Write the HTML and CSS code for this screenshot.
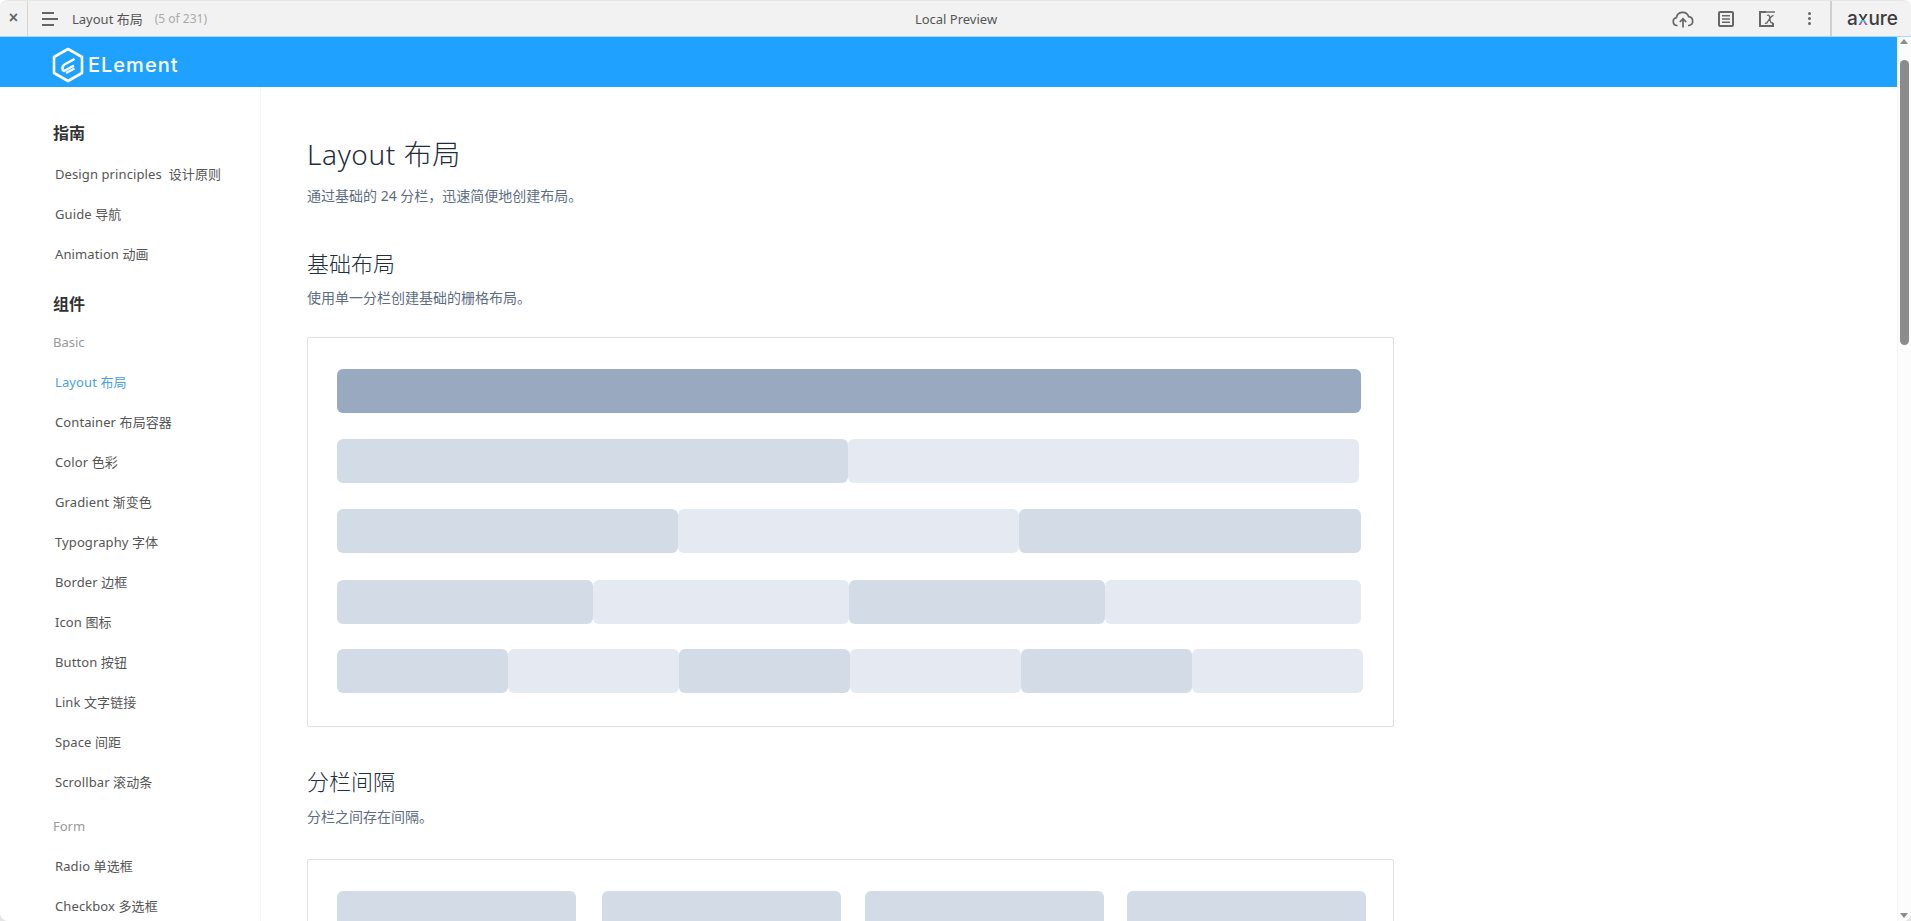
FILE: index.html
```html
<!DOCTYPE html>
<html lang="zh-CN">
<head>
<meta charset="utf-8">
<title>Layout 布局</title>
<link rel="stylesheet" href="styles.css">
</head>
<body>
<div class="app">
  <header class="topbar">
    <div class="bar-left">
      <button class="close">×</button>
      <div class="burger"><i class="l1"></i><i class="l2"></i><i class="l1"></i></div>
      <span class="page-name">Layout 布局</span>
      <span class="page-count">(5 of 231)</span>
    </div>
    <div class="bar-center">Local Preview</div>
    <div class="bar-right">
      <svg class="ico-cloud" width="22" height="18" viewBox="0 0 22 18" fill="none" stroke="#666" stroke-width="1.7"><path d="M5.5 15.5H5A4 4 0 0 1 4.4 7.6 6.3 6.3 0 0 1 16.6 6.6 4.5 4.5 0 0 1 17 15.5H16"/><path d="M11 17.5V9M7.8 12 11 8.8 14.2 12"/></svg>
      <svg class="ico-doc" width="16" height="16" viewBox="0 0 16 16" fill="none" stroke="#666"><rect x="1" y="1" width="14" height="14" rx="1" stroke-width="2"/><path d="M4 4.8H12M4 8H12M4 11.2H12" stroke-width="1.5"/></svg>
      <svg class="ico-var" width="17" height="16" viewBox="0 0 17 16" fill="none" stroke="#666"><path d="M7 1H1V15H14V12" stroke-width="2"/><path d="M7 1H16" stroke-width="1.4"/><path d="M8 4.5C10.5 3.5 10.5 5 11 8.5 11.4 11.500 12.200 12.500 14 11.500M14.500 4.500C12 4.500 9.500 9.500 8 11.800 7.300 12.500 6.500 12.300 6 11.900" stroke-width="1.3"/></svg>
      <div class="dots"><i></i><i></i><i></i></div>
      <div class="axure-logo">a<span class="axure-x">x</span>ure</div>
    </div>
  </header>
  <div class="stage">
    <div class="frame">
      <div class="brand">
        <svg width="32" height="36" viewBox="0 0 32 36" fill="none" stroke="#fff"><path d="M16 2 30 10V26L16 34 2 26V10Z" stroke-width="2.6" stroke-linejoin="round"/><path d="M22.500 12 12.500 17.500C9.500 19.500 10 23 12 24L22 18.500" stroke-width="2.400"/><path d="M14 26 22.500 21.500" stroke-width="2.400"/></svg>
        <span class="brand-name">ELement</span>
      </div>
      <div class="columns">
        <nav class="side">
          <h4 class="group first">指南</h4>
          <a class="item">Design principles&nbsp; 设计原则</a>
          <a class="item">Guide 导航</a>
          <a class="item">Animation 动画</a>
          <h4 class="group">组件</h4>
          <div class="sub">Basic</div>
          <a class="item active">Layout 布局</a>
          <a class="item">Container 布局容器</a>
          <a class="item">Color 色彩</a>
          <a class="item">Gradient 渐变色</a>
          <a class="item">Typography 字体</a>
          <a class="item">Border 边框</a>
          <a class="item">Icon 图标</a>
          <a class="item">Button 按钮</a>
          <a class="item">Link 文字链接</a>
          <a class="item">Space 间距</a>
          <a class="item">Scrollbar 滚动条</a>
          <div class="sub form">Form</div>
          <a class="item">Radio 单选框</a>
          <a class="item">Checkbox 多选框</a>
        </nav>
        <main class="content">
          <h1 class="title">Layout 布局</h1>
          <p class="lead">通过基础的 24 分栏，迅速简便地创建布局。</p>
          <h2 class="section">基础布局</h2>
          <p class="desc">使用单一分栏创建基础的栅格布局。</p>
          <div class="demo">
            <div class="rows">
              <div class="row"><div class="cell dark w1024"></div></div>
              <div class="row"><div class="cell mid w511"></div><div class="cell light w511"></div></div>
              <div class="row"><div class="cell mid w341"></div><div class="cell light w341"></div><div class="cell mid w342"></div></div>
              <div class="row r4"><div class="cell mid w256"></div><div class="cell light w256"></div><div class="cell mid w256"></div><div class="cell light w256"></div></div>
              <div class="row"><div class="cell mid w171"></div><div class="cell light w171"></div><div class="cell mid w171"></div><div class="cell light w171"></div><div class="cell mid w171"></div><div class="cell light w171"></div></div>
            </div>
          </div>
          <h2 class="section second">分栏间隔</h2>
          <p class="desc">分栏之间存在间隔。</p>
          <div class="demo tail">
            <div class="gutter"><div class="cell mid"></div><div class="cell mid"></div><div class="cell mid"></div><div class="cell mid"></div></div>
          </div>
        </main>
      </div>
    </div>
    <div class="scrollbar">
      <i class="arrow up"></i>
      <div class="thumb"></div>
      <i class="arrow down"></i>
    </div>
  </div>
</div>
</body>
</html>
```
FILE: styles.css
```css
* { box-sizing: border-box; }
html, body { height: 100%; margin: 0; overflow: hidden; }
body {
  background: linear-gradient(#fff 50%, #e4e4e4 50%);
  font-family: "Noto Sans", "Noto Sans CJK SC", sans-serif;
}
.app { height: 921px; display: flex; flex-direction: column; }

/* Preview toolbar */
.topbar {
  height: 37px;
  flex: none;
  display: grid;
  grid-template-columns: 1fr auto 1fr;
  align-items: center;
  background: #f2f2f2;
  border-top: 1px solid #e6e6e6;
  border-bottom: 1px solid #a9d8f7;
  border-radius: 8px 8px 0 0;
  font-size: 12px;
  color: #444;
}
.bar-left, .bar-right { display: flex; align-items: center; height: 100%; }
.close {
  width: 28px;
  height: 100%;
  padding: 0 0 2px;
  border: 0;
  border-right: 1px solid #d4d4d4;
  background: none;
  color: #666;
  font: 700 16px "Liberation Sans", sans-serif;
}
.burger { width: 16px; margin-left: 14px; display: flex; flex-direction: column; gap: 4px; }
.burger i { display: block; height: 2px; background: #666; }
.burger .l1 { width: 12px; }
.burger .l2 { width: 16px; }
.page-name { margin-left: 14px; font-size: 13px; color: #555; }
.page-count { margin-left: 12px; font-size: 12px; color: #aaa; }
.bar-center { font-size: 13px; color: #555; padding-left: 1px; }
.bar-right { position: relative; justify-content: flex-end; }
.ico-cloud { margin-right: 24px; }
.ico-doc { margin-right: 25px; }
.ico-var { margin-right: 32px; }
.dots { display: flex; flex-direction: column; gap: 2px; margin-right: 19px; }
.dots i { display: block; width: 3px; height: 3px; border-radius: 50%; background: #666; }
.axure-logo {
  height: 100%;
  width: 81px;
  padding: 3px 0 0 15px;
  border-left: 2px solid #cfcfcf;
  font: 500 19px/30px "Inter", sans-serif;
  color: #3d3d3d;
}
.axure-x {
  background: conic-gradient(from 45deg at 50% 58%, #2bb7d6 0 25%, #e5378f 25% 50%, #2bc4c4 50% 75%, #3d3d3d 75%);
  -webkit-background-clip: text;
  background-clip: text;
  color: transparent;
}

/* Embedded page */
.stage { flex: 1; min-height: 0; display: flex; background: #fff; border-radius: 0 0 8px 8px; overflow: hidden; }
.frame { flex: 1; min-width: 0; display: flex; flex-direction: column; }
.brand {
  height: 50px;
  flex: none;
  display: flex;
  align-items: center;
  padding: 6px 0 0 52px;
  background: #1fa2ff;
}
.brand-name {
  margin-left: 4px;
  font: 500 20px "Inter", sans-serif;
  letter-spacing: 1px;
  color: #fff;
}
.columns { flex: 1; min-height: 0; display: flex; overflow: hidden; }

/* Sidebar */
.side {
  width: 261px;
  flex: none;
  padding: 30px 0 0 53px;
  border-right: 1px solid #f6f6f6;
}
.group {
  margin: 13.500px 0 2.500px;
  font-size: 16px;
  font-weight: 700;
  line-height: 32px;
  color: #333;
}
.group.first { margin: 0 0 5px; }
.item {
  display: block;
  height: 40px;
  margin-left: 2px;
  font-size: 13px;
  letter-spacing: .1px;
  line-height: 40px;
  color: #555;
}
.item.active { color: #4a9fe6; }
.sub { height: 40px; font-size: 13px; line-height: 40px; color: #999; }
.sub.form { margin-top: 4px; }

/* Main column */
.content { flex: 1; min-width: 0; padding: 47px 0 0 46px; }
.title { margin: 0; font-size: 28px; font-weight: 300; letter-spacing: .6px; line-height: 40px; color: #1f2d3d; }
.lead, .desc { margin: 0; font-size: 14px; line-height: 20px; color: #5e6d82; }
.lead { margin-top: 12px; }
.section { margin: 41px 0 0; font-size: 22px; font-weight: 300; line-height: 32px; color: #1f2f3d; }
.section.second { margin-top: 38px; }
.desc { margin-top: 9px; }
.section.second + .desc { margin-top: 10px; }
.demo {
  width: 1087px;
  height: 390px;
  margin-top: 29px;
  padding: 31px 0 0 29px;
  border: 1px solid #dfdfdf;
  border-radius: 2px;
}
.demo.tail { height: 200px; margin-top: 32px; }
.rows { display: flex; flex-direction: column; gap: 26px; }
.row { display: flex; }
.row.r4 { margin-top: 1px; margin-bottom: -1px; }
.gutter { display: grid; grid-template-columns: 265px 263px 262px 239px; }
.cell { height: 44px; border-radius: 6px; flex: none; }
.gutter .cell { width: 239px; }
.dark { background: #99a9bf; }
.mid { background: #d3dce6; }
.light { background: #e5e9f2; }
.w1024 { width: 1024px; }
.w511 { width: 511px; }
.w341 { width: 341px; }
.w342 { width: 342px; }
.w256 { width: 256px; }
.w171 { width: 171px; }

/* Scrollbar */
.scrollbar {
  width: 14px;
  flex: none;
  position: relative;
  background: #fcfcfc;
  border-left: 1px solid #f6f6f6;
}
.thumb {
  position: absolute;
  top: 23px;
  left: 2px;
  width: 9px;
  height: 285px;
  border-radius: 5px;
  background: #8c8c8c;
}
.arrow {
  position: absolute;
  left: 2px;
  width: 0;
  height: 0;
  border: 4.500px solid transparent;
}
.arrow.up { top: 2px; border-top: 0; border-bottom: 5px solid #8c8c8c; }
.arrow.down { bottom: 3px; border-bottom: 0; border-top: 5px solid #8c8c8c; }
```
